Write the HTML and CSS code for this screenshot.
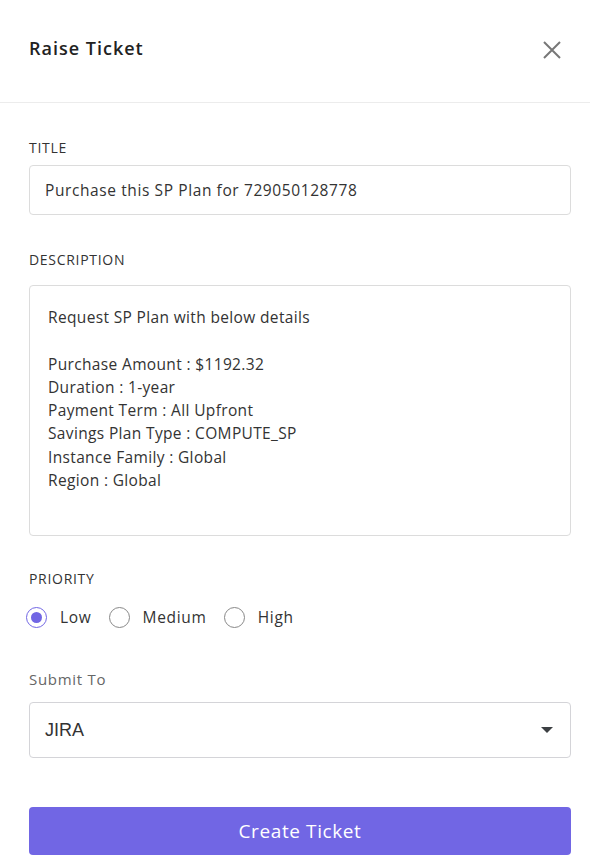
FILE: index.html
```html
<!DOCTYPE html>
<html>
<head>
<meta charset="utf-8">
<link rel="stylesheet" href="styles.css">
</head>
<body>
<div class="modal">
  <header class="modal-header">
    <h2 class="modal-title">Raise Ticket</h2>
    <button class="close-btn" aria-label="Close">
      <svg width="20" height="20" viewBox="0 0 20 20"><path d="M2 2 L18 18 M18 2 L2 18" stroke="#777" stroke-width="2" fill="none"/></svg>
    </button>
  </header>
  <div class="modal-body">
    <div class="field">
      <label class="label">TITLE</label>
      <div class="input">Purchase this SP Plan for 729050128778</div>
    </div>
    <div class="field field-desc">
      <label class="label">DESCRIPTION</label>
      <div class="textarea">
        <div>Request SP Plan with below details</div>
        <div>&nbsp;</div>
        <div>Purchase Amount : $1192.32</div>
        <div>Duration : 1-year</div>
        <div>Payment Term : All Upfront</div>
        <div>Savings Plan Type : COMPUTE_SP</div>
        <div>Instance Family : Global</div>
        <div>Region : Global</div>
      </div>
    </div>
    <div class="field field-priority">
      <label class="label">PRIORITY</label>
      <div class="radios">
        <span class="radio checked"><span class="dot"></span></span><span class="radio-label">Low</span>
        <span class="radio"></span><span class="radio-label">Medium</span>
        <span class="radio"></span><span class="radio-label">High</span>
      </div>
    </div>
    <div class="field field-submit">
      <label class="label muted">Submit To</label>
      <div class="select">
        <span class="select-value">JIRA</span>
        <span class="caret"></span>
      </div>
    </div>
    <button class="primary-btn">Create Ticket</button>
  </div>
</div>
</body>
</html>
```
FILE: styles.css
```css
* { box-sizing: border-box; }
html, body { margin: 0; padding: 0; background: #fff; }
body { font-family: "Open Sans", "Liberation Sans", sans-serif; color: #333; }

.modal { width: 590px; }

.modal-header {
  height: 103px;
  border-bottom: 1px solid #ececec;
  display: flex;
  align-items: center;
  justify-content: space-between;
  padding: 0 29px 6px 29px;
}
.modal-title {
  margin: 0;
  font-size: 18px;
  font-weight: 600;
  color: #222;
  letter-spacing: 1px;
}
.close-btn {
  border: 0;
  background: none;
  padding: 0;
  width: 20px;
  height: 20px;
  margin-right: -1px;
  margin-top: 4px;
  display: flex;
}

.modal-body { padding: 35px 19px 0 29px; }

.field { display: flex; flex-direction: column; }
.label {
  font-size: 14px;
  color: #333;
  line-height: 20px;
  margin-bottom: 7px;
  letter-spacing: 0.7px;
}
.label.muted { color: #666; font-size: 15px; letter-spacing: 0.7px; }

.input {
  height: 50px;
  border: 1px solid #dcdcdc;
  border-radius: 4px;
  padding: 0 15px;
  display: flex;
  align-items: center;
  font-size: 15.5px;
  letter-spacing: 0.6px;
  color: #333;
}

.field-desc { margin-top: 35px; }
.field-desc .label { margin-bottom: 15px; }
.textarea {
  height: 251px;
  border: 1px solid #dcdcdc;
  border-radius: 4px;
  padding: 20px 18px;
  font-size: 15.5px;
  letter-spacing: 0.35px;
  line-height: 23.3px;
  color: #333;
}

.field-priority { margin-top: 33px; }
.field-priority .label { margin-bottom: 17px; }
.radios { display: flex; align-items: center; margin-left: -3px; height: 22px; }
.radio {
  width: 21px; height: 21px;
  border: 1.5px solid #888;
  border-radius: 50%;
  display: flex; align-items: center; justify-content: center;
  flex: none;
}
.radio.checked { border-color: #7166e4; }
.radio .dot { width: 11px; height: 11px; border-radius: 50%; background: #7166e4; }
.radio-label { font-size: 15.5px; letter-spacing: 0.7px; margin: 0 17px 0 13px; color: #333; }

.field-submit { margin-top: 41px; }
.field-submit .label { margin-bottom: 13px; }
.select {
  height: 56px;
  border: 1px solid #d4d4d8;
  border-radius: 4px;
  display: flex;
  align-items: center;
  justify-content: space-between;
  padding: 0 17px 0 15px;
}
.select-value { font-family: "Liberation Sans", Arial, sans-serif; font-size: 18px; color: #333; }
.caret {
  width: 0; height: 0;
  border-left: 6px solid transparent;
  border-right: 6px solid transparent;
  border-top: 6px solid #3c4043;
}

.primary-btn {
  margin-top: 49px;
  width: 100%;
  height: 48px;
  border: 0;
  border-radius: 4px;
  background: #7166e4;
  color: #fff;
  font-family: "Open Sans", sans-serif;
  font-size: 19px;
  letter-spacing: 0.6px;
  font-weight: 500;
}
```
